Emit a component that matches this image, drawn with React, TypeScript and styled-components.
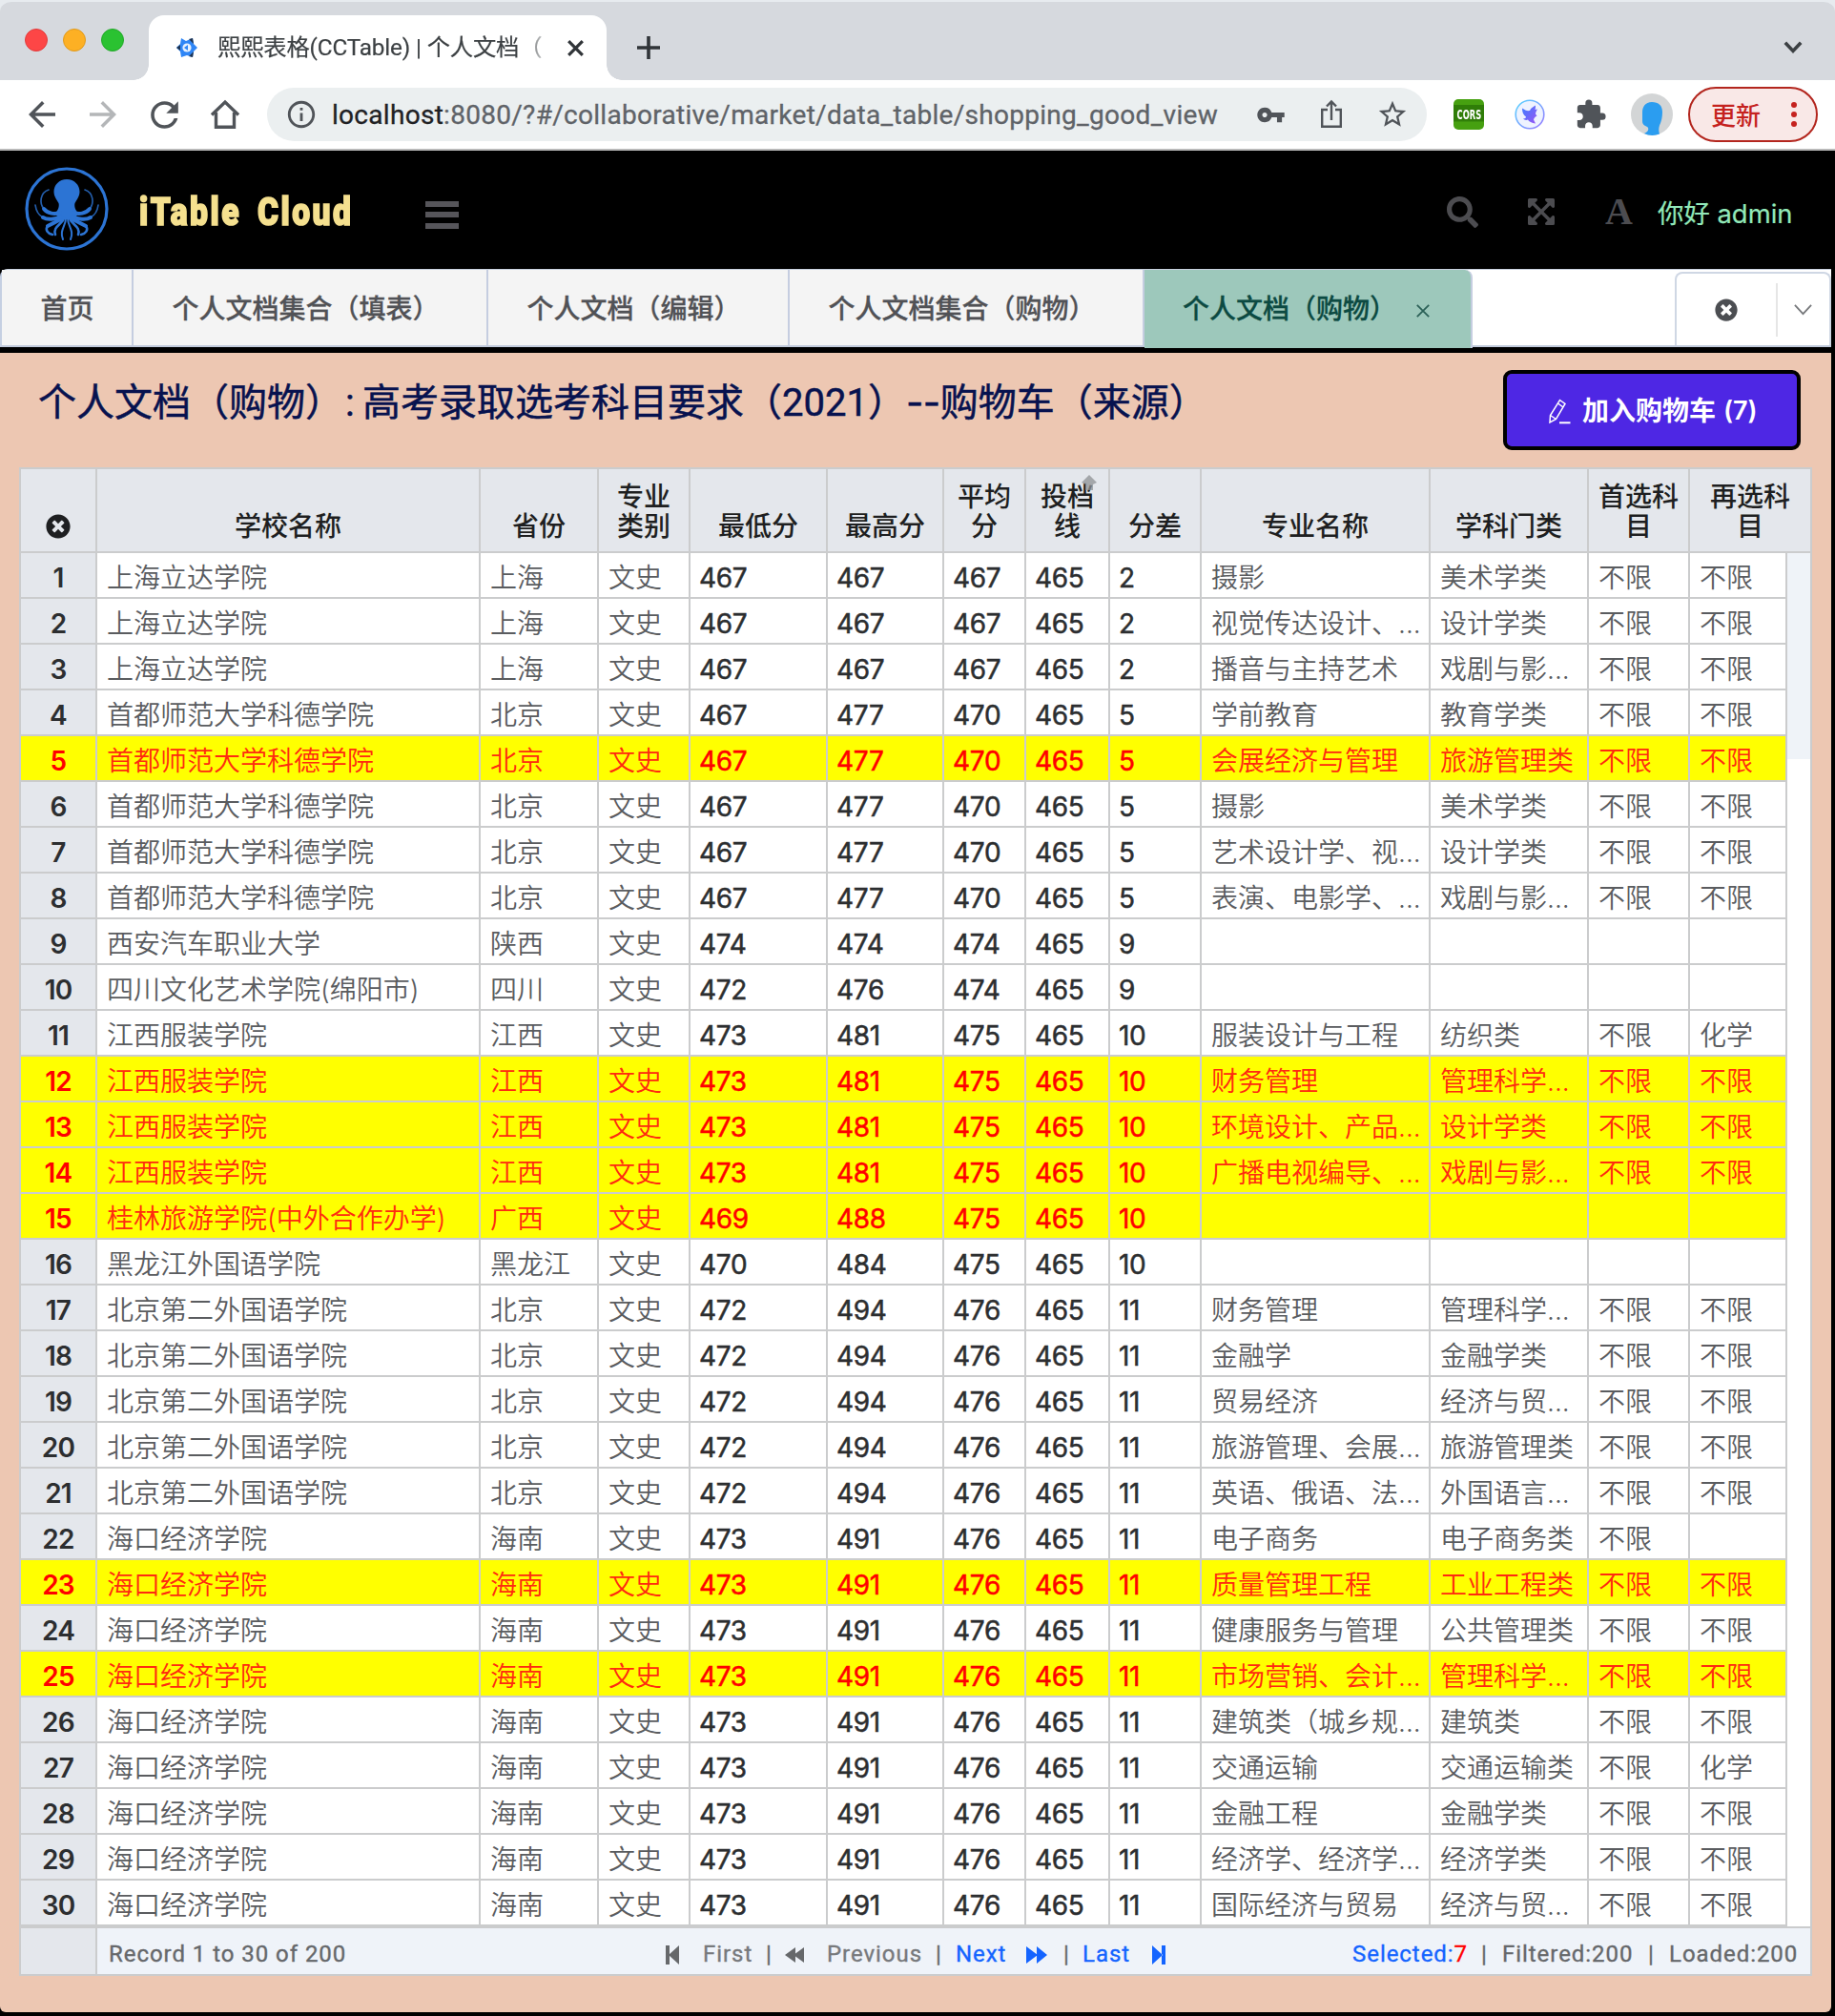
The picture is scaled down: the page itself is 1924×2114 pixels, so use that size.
import React from "react";
import styled, { createGlobalStyle, css } from "styled-components";
import {
  MdArrowBack,
  MdArrowForward,
  MdRefresh,
  MdInfoOutline,
  MdVpnKey,
  MdStarBorder,
  MdExtension,
} from "react-icons/md";
import { FaTimesCircle, FaSearch, FaExpandArrowsAlt } from "react-icons/fa";

const FONT = `Inter, "Noto Sans CJK SC", sans-serif`;

const GlobalStyle = createGlobalStyle`
  * { box-sizing: border-box; }
  body { margin: 0; background: #000; font-family: ${FONT}; }
`;

const Page = styled.div`
  width: 1924px;
  height: 2114px;
  display: flex;
  flex-direction: column;
  overflow: hidden;
  background: #000;
`;

/* ---------- browser chrome ---------- */

const StripBack = styled.div`
  flex: none;
  background: #e7ebef;
`;

const TabStrip = styled.div`
  height: 84px;
  flex: none;
  display: flex;
  align-items: flex-end;
  background: #d6d9de;
  border-top: 2px solid #e7ebef;
  border-radius: 12px 12px 0 0;
`;

const Lights = styled.div`
  width: 156px;
  height: 100%;
  padding: 28px 0 0 26px;
  display: flex;
  gap: 16px;
`;

const Light = styled.i<{ $c: string; $b: string }>`
  width: 24px;
  height: 24px;
  border-radius: 50%;
  background: ${(p) => p.$c};
  border: 1px solid ${(p) => p.$b};
`;

const BrowserTab = styled.div`
  position: relative;
  width: 480px;
  height: 68px;
  padding: 0 24px 0 28px;
  display: flex;
  align-items: center;
  justify-content: space-between;
  border-radius: 16px 16px 0 0;
  background: #fff;
  &::before,
  &::after {
    content: "";
    position: absolute;
    bottom: 0;
    width: 16px;
    height: 16px;
  }
  &::before {
    left: -16px;
    background: radial-gradient(circle at 0 0, transparent 15.5px, #fff 16px);
  }
  &::after {
    right: -16px;
    background: radial-gradient(circle at 100% 0, transparent 15.5px, #fff 16px);
  }
`;

const BrowserTabTitle = styled.div`
  width: 352px;
  margin: 0 auto 0 20px;
  overflow: hidden;
  white-space: nowrap;
  font: 400 24.3px/34px Roboto, "Noto Sans CJK SC", sans-serif;
  letter-spacing: -0.15px;
  color: #3c4043;
  -webkit-text-stroke: 0.2px currentColor;
  mask-image: linear-gradient(90deg, #000 318px, transparent 352px);
`;

const NewTab = styled.span`
  margin: 0 0 22px 32px;
  display: flex;
  color: #303438;
`;

const TabSearch = styled.span`
  margin: 0 34px 27px auto;
  display: flex;
  color: #3c4043;
`;

const IconSlot = styled.span<{ $w: number; $color?: string; $drop?: number }>`
  flex: none;
  width: ${(p) => p.$w}px;
  height: 100%;
  padding-top: ${(p) => p.$drop ?? 0}px;
  display: flex;
  align-items: center;
  justify-content: center;
  color: ${(p) => p.$color ?? "#505459"};
  svg {
    flex: none;
  }
`;

const Toolbar = styled.div`
  height: 74px;
  flex: none;
  display: flex;
  align-items: center;
  padding: 0 18px 0 12px;
  background: #fff;
  border-bottom: 2px solid #b9b9b9;
`;

const Omnibox = styled.div`
  width: 1216px;
  height: 56px;
  margin: 0 12px;
  padding: 0 4px 0 20px;
  display: flex;
  align-items: center;
  border-radius: 28px;
  background: #ebeff0;
`;

const Url = styled.div`
  flex: 1;
  margin-left: 16px;
  padding-top: 1px;
  white-space: nowrap;
  font: 400 28px/36px Roboto, sans-serif;
  letter-spacing: 0.29px;
  color: #5f6368;
  -webkit-text-stroke: 0.3px currentColor;
  b {
    font-weight: 400;
    color: #202124;
  }
`;

const UpdateButton = styled.div`
  width: 136px;
  height: 58px;
  margin-left: 6px;
  padding: 0 20px 0 22px;
  display: flex;
  align-items: center;
  justify-content: space-between;
  border: 2px solid #b3261e;
  border-radius: 29px;
  background: #f9e8e7;
  color: #c5221f;
  font: 500 26px/40px "Noto Sans CJK SC", sans-serif;
`;

const Dots = styled.span`
  display: flex;
  flex-direction: column;
  gap: 4px;
  i {
    width: 6px;
    height: 6px;
    border-radius: 50%;
    background: #c5221f;
  }
`;

const CorsBadge = styled.span`
  width: 32px;
  height: 32px;
  border-radius: 5px;
  display: flex;
  align-items: center;
  justify-content: center;
  background: linear-gradient(#46a010 0 18%, #2f7d08 20% 70%, #46a010 76%);
  color: #fff;
  font: 700 14px/16px "DejaVu Sans Condensed", Roboto, sans-serif;
  span {
    transform: scaleX(0.66);
  }
`;

/* ---------- application header ---------- */

const Header = styled.header`
  height: 124px;
  flex: none;
  display: flex;
  align-items: center;
  padding-left: 25px;
  background: #000;
`;

const Brand = styled.div`
  width: 300px;
  margin: 5px 0 0 31px;
  font: 900 40px/50px Roboto, sans-serif;
  letter-spacing: 3px;
  word-spacing: 7px;
  color: #f5e08f;
  -webkit-text-stroke: 1.6px #f5e08f;
  stroke-linejoin: round;
  white-space: nowrap;
  transform: scaleX(0.84);
  transform-origin: 0 50%;
`;

const Burger = styled.div`
  width: 35px;
  margin-top: 10px;
  display: flex;
  flex-direction: column;
  gap: 5.5px;
  i {
    height: 6px;
    background: #56555a;
  }
`;

const HeaderTools = styled.div`
  height: 100%;
  margin-left: auto;
  display: flex;
  align-items: center;
`;

const FontGlyph = styled.span`
  font: 700 40px/44px "Liberation Serif", serif;
`;

const Greeting = styled.div`
  width: 186px;
  padding-top: 8px;
  white-space: nowrap;
  font: 400 27.4px/40px ${FONT};
  color: #92e8b9;
  -webkit-text-stroke: 0.2px currentColor;
`;

/* ---------- page tabs ---------- */

const PageTabs = styled.nav`
  width: 1920px;
  height: 82px;
  flex: none;
  display: flex;
  background: #fff;
  border-top: 1px solid #c8d0de;
  border-bottom: 2px solid #c2cbdc;
  border-left: 2px solid #c5cfe2;
  border-radius: 8px 0 0 0;
`;

const PageTab = styled.div<{ $w: number; $active?: boolean }>`
  width: ${(p) => p.$w}px;
  height: 79px;
  padding: 3px 0 0 40.5px;
  display: flex;
  align-items: center;
  white-space: nowrap;
  font: 500 28px/40px ${FONT};
  background: #f4f4f4;
  color: #515256;
  -webkit-text-stroke: 0.3px currentColor;
  border-right: 2px solid #c5cde0;
  ${(p) =>
    p.$active &&
    css`
      height: 82px;
      padding-left: 40px;
      padding-bottom: 3px;
      background: #9dc8bb;
      color: #0c4a42;
      border-top-right-radius: 8px;
    `}
`;

const TabClose = styled.svg`
  margin: 4px 0 0 21px;
`;

const TabActions = styled.div`
  width: 164px;
  height: 77px;
  margin: 2px 0 0 auto;
  display: flex;
  align-items: center;
  border: 2px solid #cfd7e4;
  border-bottom: 0;
  border-radius: 8px 8px 0 0;
`;

const ActionDivider = styled.i`
  width: 2px;
  height: 56px;
  background: #e6e6e6;
`;

/* ---------- content ---------- */

const Content = styled.main`
  width: 1920px;
  height: 1740px;
  flex: none;
  margin-top: 6px;
  padding: 18px 20px 0;
  background: #edc7b2;
  border-radius: 0 0 6px 6px;
`;

const TitleRow = styled.div`
  height: 102px;
  padding: 0 12px 0 20px;
  display: flex;
  justify-content: space-between;
  align-items: flex-start;
`;

const Title = styled.h1`
  margin: 6px 0 0;
  font: 400 40px/56px Roboto, "Noto Sans CJK SC", sans-serif;
  color: #07124f;
  -webkit-text-stroke: 0.5px currentColor;
  white-space: nowrap;
`;

const Colon = styled.span`
  display: inline-block;
  width: 20px;
  padding-left: 2px;
`;

const Dashes = styled.span`
  font-family: Inter, sans-serif;
  letter-spacing: -0.5px;
`;

const CartButton = styled.div`
  width: 312px;
  height: 84px;
  display: flex;
  align-items: center;
  padding: 1px 0 0 43px;
  border: 4px solid #000;
  border-radius: 9px;
  background: #4e27e4;
  color: #fff;
  font: 700 28px/40px ${FONT};
  white-space: nowrap;
  svg {
    margin-right: 12px;
  }
  span {
    margin-left: 8px;
    font-weight: 600;
    font-size: 27px;
    letter-spacing: -0.1px;
  }
`;

const LINE = "#cbcccd";
const COLS = [80, 402, 124, 96, 144, 122, 86, 88, 96, 240, 166, 106, 102];

const Grid = styled.section`
  width: 1880px;
  height: 1582px;
  border: 2px solid ${LINE};
  background: #fff;
`;

const HeadRow = styled.div`
  height: 88px;
  display: grid;
  grid-template-columns: ${COLS.slice(0, 12).map((w) => w + "px").join(" ")} 1fr;
  border-bottom: 2px solid ${LINE};
  background: #e4e7ec;
`;

const HeadCell = styled.div`
  position: relative;
  display: flex;
  align-items: flex-end;
  justify-content: center;
  padding: 0 0 13px;
  text-align: center;
  white-space: pre-line;
  border-right: 2px solid ${LINE};
  font: 500 28px/30.5px "Noto Sans CJK SC", sans-serif;
  color: #1e1f21;
  &:last-child {
    border-right: 0;
  }
`;

const SortMark = styled.svg`
  position: absolute;
  top: 6px;
  right: 11px;
`;

const Body = styled.div`
  height: 1440px;
  display: flex;
`;

const Rows = styled.div`
  width: 1852px;
`;

const Row = styled.div<{ $hit: boolean }>`
  height: 48px;
  display: grid;
  grid-template-columns: ${COLS.map((w) => w + "px").join(" ")};
  color: ${(p) => (p.$hit ? "#ff2a10" : "#5a5c5f")};
  background: ${(p) => (p.$hit ? "#ffff00" : "#fff")};
`;

const Cell = styled.div<{ $kind: "index" | "num" | "text"; $hit: boolean }>`
  height: 48px;
  padding: 5px 0 0 10px;
  overflow: hidden;
  white-space: nowrap;
  border-right: 2px solid ${LINE};
  border-bottom: 2px solid ${LINE};
  font: 350 28px/43px ${FONT};
  ${(p) =>
    p.$kind !== "text" &&
    css`
      padding-left: 9px;
      font-weight: 400;
      letter-spacing: -0.3px;
      -webkit-text-stroke: 0.5px currentColor;
      color: ${p.$hit ? "#ff0000" : "#2c2e30"};
    `}
  ${(p) =>
    p.$kind === "index" &&
    css`
      padding-left: 0;
      text-align: center;
      font-weight: 600;
      letter-spacing: -0.8px;
      -webkit-text-stroke: 0;
      background: ${p.$hit ? "#ffff00" : "#e4e7ec"};
    `}
`;

const ScrollLane = styled.div`
  width: 24px;
  background: #fff;
`;

const ScrollThumb = styled.div`
  height: 216px;
  background: #eff3f8;
`;

const Footer = styled.footer`
  height: 50px;
  display: flex;
  align-items: center;
  border-top: 2px solid ${LINE};
  background: #eff3f9;
  font: 400 24px/32px Roboto, sans-serif;
  letter-spacing: 0.95px;
  color: #66686b;
  -webkit-text-stroke: 0.35px currentColor;
  white-space: nowrap;
`;

const FootCorner = styled.div`
  width: 80px;
  height: 100%;
  border-right: 2px solid ${LINE};
  background: #e4e7ec;
`;

const FootText = styled.span<{ $w: number; $c?: string }>`
  flex: none;
  width: ${(p) => p.$w}px;
  padding-top: 6px;
  color: ${(p) => p.$c ?? "inherit"};
  em {
    font-style: normal;
    color: #f00;
  }
`;

const FootLead = styled(FootText)`
  padding-left: 12px;
`;

const FootIcon = styled.svg<{ $gap: number }>`
  flex: none;
  margin: 8px ${(p) => p.$gap}px 0 0;
`;

const X = "不限";
type Rec = [string, string, string, string, string, string, string, string, string, string];
const block = (
  school: string,
  prov: string,
  lo: number,
  hi: number,
  avg: number,
  diff: number,
  majors: [string, string, string, string][]
): Rec[] =>
  majors.map((m) => [school, prov, String(lo), String(hi), String(avg), String(diff), ...m]);

const DATA: Rec[] = [
  ...block("上海立达学院", "上海", 467, 467, 467, 2, [
    ["摄影", "美术学类", X, X],
    ["视觉传达设计、...", "设计学类", X, X],
    ["播音与主持艺术", "戏剧与影...", X, X],
  ]),
  ...block("首都师范大学科德学院", "北京", 467, 477, 470, 5, [
    ["学前教育", "教育学类", X, X],
    ["会展经济与管理", "旅游管理类", X, X],
    ["摄影", "美术学类", X, X],
    ["艺术设计学、视...", "设计学类", X, X],
    ["表演、电影学、...", "戏剧与影...", X, X],
  ]),
  ...block("西安汽车职业大学", "陕西", 474, 474, 474, 9, [["", "", "", ""]]),
  ...block("四川文化艺术学院(绵阳市)", "四川", 472, 476, 474, 9, [["", "", "", ""]]),
  ...block("江西服装学院", "江西", 473, 481, 475, 10, [
    ["服装设计与工程", "纺织类", X, "化学"],
    ["财务管理", "管理科学...", X, X],
    ["环境设计、产品...", "设计学类", X, X],
    ["广播电视编导、...", "戏剧与影...", X, X],
  ]),
  ...block("桂林旅游学院(中外合作办学)", "广西", 469, 488, 475, 10, [["", "", "", ""]]),
  ...block("黑龙江外国语学院", "黑龙江", 470, 484, 475, 10, [["", "", "", ""]]),
  ...block("北京第二外国语学院", "北京", 472, 494, 476, 11, [
    ["财务管理", "管理科学...", X, X],
    ["金融学", "金融学类", X, X],
    ["贸易经济", "经济与贸...", X, X],
    ["旅游管理、会展...", "旅游管理类", X, X],
    ["英语、俄语、法...", "外国语言...", X, X],
  ]),
  ...block("海口经济学院", "海南", 473, 491, 476, 11, [
    ["电子商务", "电子商务类", X, ""],
    ["质量管理工程", "工业工程类", X, X],
    ["健康服务与管理", "公共管理类", X, X],
    ["市场营销、会计...", "管理科学...", X, X],
    ["建筑类（城乡规...", "建筑类", X, X],
    ["交通运输", "交通运输类", X, "化学"],
    ["金融工程", "金融学类", X, X],
    ["经济学、经济学...", "经济学类", X, X],
    ["国际经济与贸易", "经济与贸...", X, X],
  ]),
];

const SELECTED = new Set([5, 12, 13, 14, 15, 23, 25]);

const HEADS = [
  "学校名称",
  "省份",
  "专业\n类别",
  "最低分",
  "最高分",
  "平均\n分",
  "投档\n线",
  "分差",
  "专业名称",
  "学科门类",
  "首选科\n目",
  "再选科\n目",
];

const Favicon = () => (
  <svg width="24" height="22" viewBox="0 0 24 22">
    <path d="M6 1l5 3 7-3 1 6 4 4-4 4-1 6-6-2-6 2-1-6-4-4 4-4z" fill="#2f86f6" />
    <path d="M1 11l4-3v6zM14 2l4-1 1 6zM14 20l4 1 1-6z" fill="#1e3350" />
    <circle cx="12" cy="11" r="4.6" fill="#e6f1ff" />
    <path d="M9 11l4-3v6z" fill="#2f86f6" />
  </svg>
);

const Octopus = () => (
  <svg width="90" height="90" viewBox="0 0 90 90" fill="none" stroke="#2c74d4" strokeLinecap="round">
    <circle cx="45" cy="44" r="42" strokeWidth="3.2" />
    <path
      d="M45 13c-8 0-13.500 6-13.500 13 0 5 3 8.500 5 12 1 4-1 8-4 11l6 6h13l6-6c-3-3-5-7-4-11 2-3.500 5-7 5-12 0-7-5.500-13-13.500-13z"
      fill="#2c74d4"
      stroke="none"
    />
    <g strokeWidth="4">
      <path d="M38 48c-6 2-13 1-17-4" />
      <path d="M52 48c6 2 13 1 17-4" />
      <path d="M39 52c-6 3-14 4-19 1" />
      <path d="M51 52c6 3 14 4 19 1" />
      <path d="M40 54c-5 3-11 6-15 8" />
      <path d="M50 54c5 3 11 6 15 8" />
    </g>
    <g strokeWidth="1.700" strokeOpacity="0.8">
      <path d="M21 44c-5-6-4-17 5-20" />
      <path d="M69 44c5-6 4-17-5-20" />
      <path d="M20 53c-4-2-7-6-8-13" />
      <path d="M70 53c4-2 7-6 8-13" />
    </g>
    <g strokeWidth="2.600">
      <path d="M25 62c-3 4 0 8 5 9" />
      <path d="M65 62c3 4 0 8-5 9" />
      <path d="M42 54c-2 6-12 9-9 17" />
      <path d="M48 54c2 6 12 9 9 17" />
      <path d="M44 54c0 8-7 13-3 22" strokeWidth="2" />
      <path d="M46 54c0 8 7 13 3 22" strokeWidth="2" />
    </g>
  </svg>
);

const HomeIcon = () => (
  <svg width="32" height="32" viewBox="0 0 32 32" fill="none" stroke="currentColor" strokeWidth="3.400">
    <path d="M2 16.500L16 3l14 13.500" />
    <path d="M6.500 14v15.300h19V14" />
  </svg>
);

const ShareIcon = () => (
  <svg width="24" height="32" viewBox="0 0 24 32" fill="none" stroke="currentColor" strokeWidth="2.400">
    <path d="M8 11H2.200v17.800h19.600V11H16" />
    <path d="M12 22V2.500M7 7.500l5-5 5 5" />
  </svg>
);

const BirdIcon = () => (
  <svg width="32" height="32" viewBox="0 0 32 32">
    <defs>
      <linearGradient id="ring" x1="0" y1="0" x2="1" y2="1">
        <stop offset="0" stopColor="#56d5ff" />
        <stop offset="1" stopColor="#9a7bff" />
      </linearGradient>
      <linearGradient id="bird" x1="0" y1="0" x2="1" y2="1">
        <stop offset="0" stopColor="#3d7dff" />
        <stop offset="1" stopColor="#9a55f5" />
      </linearGradient>
    </defs>
    <circle cx="16" cy="16" r="14.800" fill="#eef3ff" stroke="url(#ring)" strokeWidth="1.600" />
    <path
      d="M8 9.500c3 2 5 3 8 2.500 1-3 4-4 6-5.500 0 2 0 3-.5 4.500l2.500-.5c-1 2-2 3-2 5l1.500 2c-2 1-3 2-3.500 4l2 4c-4-.5-7-2-8-4-2 1-4 0-5-1 2 0 3-1 3-2-3-2-4-5-4-9z"
      fill="url(#bird)"
    />
  </svg>
);

const Avatar = () => (
  <svg width="44" height="44" viewBox="0 0 44 44">
    <circle cx="22" cy="22" r="22" fill="#d3d5d6" />
    <path
      d="M22 9c-7 0-10 5-10 11v9c0 5 5 5 6 7 1 3-1 4-4 6 5 2.500 11 2.500 16 .5-1-3-1-6 0-9 2-4 3-9 3-14 0-7-4-10.500-11-10.500z"
      fill="#2b9df0"
    />
  </svg>
);

const Chevron = ({ w, h, s }: { w: number; h: number; s: number }) => (
  <svg width={w} height={h} viewBox={`0 0 ${w} ${h}`} fill="none" stroke="currentColor" strokeWidth={s}>
    <path d={`M${s / 2} ${s / 2}L${w / 2} ${h - s}L${w - s / 2} ${s / 2}`} />
  </svg>
);

const PenIcon = () => (
  <svg width="24" height="28" viewBox="0 0 24 28" fill="none" stroke="#fff" strokeWidth="1.500">
    <path d="M12.500 2.500l5.500 4-9.500 16L2 26l.5-7.500zM10.500 6l5.500 4M2.500 18.500l6 4" />
    <path d="M12 26.300h11.500" strokeWidth="2" />
  </svg>
);

const kindOf = (i: number) => (i >= 3 && i <= 7 ? "num" : "text");

export default function App() {
  return (
    <Page>
      <GlobalStyle />
      <StripBack>
        <TabStrip>
          <Lights>
            <Light $c="#fd4646" $b="#e23b3b" />
            <Light $c="#fdb024" $b="#e09a1c" />
            <Light $c="#2ac231" $b="#22a829" />
          </Lights>
          <BrowserTab>
            <Favicon />
            <BrowserTabTitle>熙熙表格(CCTable) | 个人文档（</BrowserTabTitle>
            <svg width="17" height="17" viewBox="0 0 17 17" stroke="#303438" strokeWidth="3.200">
              <path d="M1.200 1.200l14.600 14.600M15.800 1.200L1.200 15.800" />
            </svg>
          </BrowserTab>
          <NewTab>
            <svg width="24" height="24" viewBox="0 0 24 24" stroke="currentColor" strokeWidth="3.600">
              <path d="M0 12h24M12 0v24" />
            </svg>
          </NewTab>
          <TabSearch>
            <Chevron w={20} h={14} s={3.6} />
          </TabSearch>
        </TabStrip>
      </StripBack>
      <Toolbar>
        <IconSlot $w={64}><MdArrowBack size={42} /></IconSlot>
        <IconSlot $w={64} $color="#b4b6b8"><MdArrowForward size={42} /></IconSlot>
        <IconSlot $w={64}><MdRefresh size={43} /></IconSlot>
        <IconSlot $w={64}><HomeIcon /></IconSlot>
        <Omnibox>
          <IconSlot $w={32}><MdInfoOutline size={34} /></IconSlot>
          <Url>
            <b>localhost</b>:8080/?#/collaborative/market/data_table/shopping_good_view
          </Url>
          <IconSlot $w={64}><MdVpnKey size={31} /></IconSlot>
          <IconSlot $w={64}><ShareIcon /></IconSlot>
          <IconSlot $w={64}><MdStarBorder size={34} /></IconSlot>
        </Omnibox>
        <IconSlot $w={64}>
          <CorsBadge>
            <span>CORS</span>
          </CorsBadge>
        </IconSlot>
        <IconSlot $w={64}><BirdIcon /></IconSlot>
        <IconSlot $w={64}><MdExtension size={34} /></IconSlot>
        <IconSlot $w={64}><Avatar /></IconSlot>
        <UpdateButton>
          更新
          <Dots>
            <i />
            <i />
            <i />
          </Dots>
        </UpdateButton>
      </Toolbar>

      <Header>
        <Octopus />
        <Brand>iTable Cloud</Brand>
        <Burger>
          <i />
          <i />
          <i />
        </Burger>
        <HeaderTools>
          <IconSlot $w={83} $drop={4} $color="#4c4c50"><FaSearch size={33} /></IconSlot>
          <IconSlot $w={82} $drop={4} $color="#4c4c50"><FaExpandArrowsAlt size={32} /></IconSlot>
          <IconSlot $w={81} $drop={3} $color="#4c4c50">
            <FontGlyph>A</FontGlyph>
          </IconSlot>
          <Greeting>你好 admin</Greeting>
        </HeaderTools>
      </Header>

      <PageTabs>
        <PageTab $w={138}>首页</PageTab>
        <PageTab $w={372}>个人文档集合（填表）</PageTab>
        <PageTab $w={316}>个人文档（编辑）</PageTab>
        <PageTab $w={372}>个人文档集合（购物）</PageTab>
        <PageTab $w={344} $active>
          个人文档（购物）
          <TabClose width="14" height="14" viewBox="0 0 14 14" stroke="#2b6157" strokeWidth="1.800">
            <path d="M.8.8l12.400 12.400M13.200.8L.8 13.200" />
          </TabClose>
        </PageTab>
        <TabActions>
          <IconSlot $w={104} $color="#4c4e52"><FaTimesCircle size={24} /></IconSlot>
          <ActionDivider />
          <IconSlot $w={52} $color="#77797c"><Chevron w={19} h={12} s={1.8} /></IconSlot>
        </TabActions>
      </PageTabs>

      <Content>
        <TitleRow>
          <Title>
            个人文档（购物）<Colon>:</Colon>高考录取选考科目要求（2021）<Dashes>--</Dashes>购物车（来源）
          </Title>
          <CartButton>
            <PenIcon />
            加入购物车<span>(7)</span>
          </CartButton>
        </TitleRow>
        <Grid>
          <HeadRow>
            <HeadCell>
              <FaTimesCircle size={26} />
            </HeadCell>
            {HEADS.map((h) => (
              <HeadCell key={h}>
                {h}
                {h.startsWith("投档") && (
                  <SortMark width="18" height="16" viewBox="0 0 18 16">
                    <path d="M9 0l8 8-4 2v6H5v-6L1 8z" fill="#8f9194" fillOpacity="0.75" />
                  </SortMark>
                )}
              </HeadCell>
            ))}
          </HeadRow>
          <Body>
            <Rows>
              {DATA.map(([school, prov, lo, hi, avg, diff, ...rest], i) => {
                const hit = SELECTED.has(i + 1);
                const cells = [school, prov, "文史", lo, hi, avg, "465", diff, ...rest];
                return (
                  <Row key={i} $hit={hit}>
                    <Cell $kind="index" $hit={hit}>{i + 1}</Cell>
                    {cells.map((c, j) => (
                      <Cell key={j} $kind={kindOf(j)} $hit={hit}>{c}</Cell>
                    ))}
                  </Row>
                );
              })}
            </Rows>
            <ScrollLane>
              <ScrollThumb />
            </ScrollLane>
          </Body>
          <Footer>
            <FootCorner />
            <FootLead $w={596}>Record 1 to 30 of 200</FootLead>
            <FootIcon $gap={25} width="14" height="20" viewBox="0 0 14 20" fill="#66686b">
              <path d="M0 0h4v20H0zM14 0v20L3 10z" />
            </FootIcon>
            <FootText $w={66} $c="#77797c">First</FootText>
            <FootText $w={20}>|</FootText>
            <FootIcon $gap={24} width="20" height="16" viewBox="0 0 20 16" fill="#66686b">
              <path d="M11 0v16L0 8zM20 0v16L9 8z" />
            </FootIcon>
            <FootText $w={114} $c="#77797c">Previous</FootText>
            <FootText $w={21}>|</FootText>
            <FootText $w={74} $c="#1464ff">Next</FootText>
            <FootIcon $gap={17} width="22" height="18" viewBox="0 0 22 18" fill="#1464ff">
              <path d="M0 0v18L12 9zM11 0v18l11-9z" />
            </FootIcon>
            <FootText $w={20}>|</FootText>
            <FootText $w={73} $c="#1464ff">Last</FootText>
            <FootIcon $gap={196} width="14" height="20" viewBox="0 0 14 20" fill="#1464ff">
              <path d="M10 0h4v20h-4zM0 0v20l11-10z" />
            </FootIcon>
            <FootText $w={135} $c="#1464ff">
              Selected:<em>7</em>
            </FootText>
            <FootText $w={22}>|</FootText>
            <FootText $w={153}>Filtered:200</FootText>
            <FootText $w={22}>|</FootText>
            <FootText $w={140}>Loaded:200</FootText>
          </Footer>
        </Grid>
      </Content>
    </Page>
  );
}
